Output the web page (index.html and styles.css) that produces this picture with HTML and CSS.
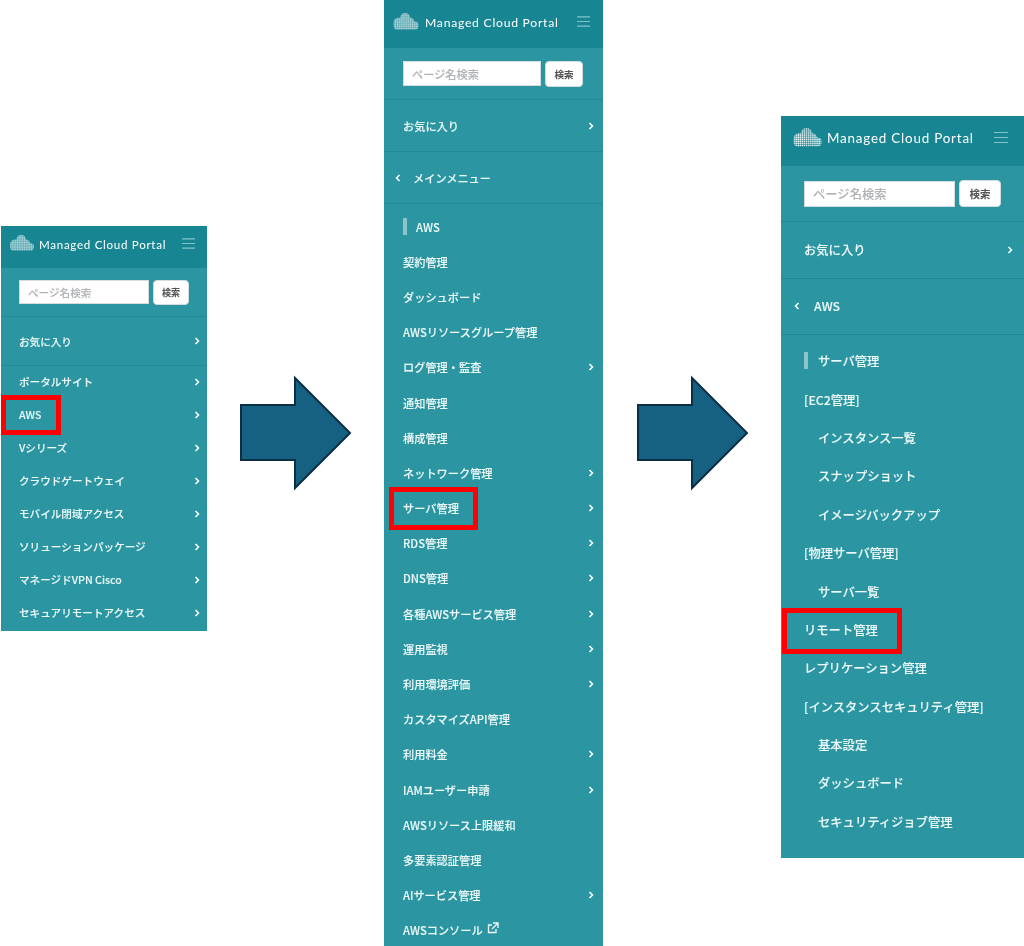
FILE: index.html
```html
<!DOCTYPE html>
<html lang="ja">
<head>
<meta charset="utf-8">
<title>Managed Cloud Portal</title>
<link rel="stylesheet" href="styles.css">
</head>
<body>
<svg class="defs" width="0" height="0" aria-hidden="true">
  <defs>
    <pattern id="dots" width="2.2" height="2.2" patternUnits="userSpaceOnUse">
      <rect x="0.2" y="0.2" width="1.5" height="1.5" fill="#fff"/>
    </pattern>
    <clipPath id="cloud">
      <path d="M0 13 Q0 6 6 5.500 L8 5.500 Q9 0 14 0 Q19 0 20 5.500 Q24 5.500 25 10 Q30 10 30 14.500 Q30 19.500 26 19.500 L4 19.500 Q0 19.500 0 13 Z"/>
    </clipPath>
    <symbol id="logo" viewBox="0 0 30 20">
      <rect width="30" height="20" fill="url(#dots)" clip-path="url(#cloud)"/>
    </symbol>
    <symbol id="chev-r" viewBox="0 0 6 8">
      <path d="M1.500 1 L4.500 4 L1.500 7" fill="none" stroke="currentColor" stroke-width="1.500"/>
    </symbol>
    <symbol id="chev-l" viewBox="0 0 6 8">
      <path d="M4.500 1 L1.500 4 L4.500 7" fill="none" stroke="currentColor" stroke-width="1.500"/>
    </symbol>
    <symbol id="burger" viewBox="0 0 14 12">
      <path d="M0 1 H14 M0 6 H14 M0 11 H14" stroke="currentColor" stroke-width="1.200"/>
    </symbol>
    <symbol id="arrow" viewBox="0 0 112 116">
      <path d="M1 30 H55 V3 L110 58 L55 113 V85 H1 Z" fill="#166082" stroke="#0b2f45" stroke-width="2"/>
    </symbol>
    <symbol id="ext" viewBox="0 0 12 12">
      <path d="M9 7 V10.500 H1.500 V3 H5 M6 1 H11 V6 M11 1 L5 7" fill="none" stroke="currentColor" stroke-width="1.300"/>
    </symbol>
  </defs>
</svg>

<main class="stage">
  <section class="panel panel-sm">
    <header class="head">
      <svg class="logo"><use href="#logo"/></svg>
      <span class="brand">Managed Cloud Portal</span>
      <svg class="burger"><use href="#burger"/></svg>
    </header>
    <form class="search">
      <div class="field">ページ名検索</div>
      <div class="btn">検索</div>
    </form>
    <div class="block"><span>お気に入り</span><svg class="chev"><use href="#chev-r"/></svg></div>
    <ul class="menu">
      <li class="row"><span>ポータルサイト</span><svg class="chev"><use href="#chev-r"/></svg></li>
      <li class="row"><span>AWS</span><svg class="chev"><use href="#chev-r"/></svg><i class="mark mark-1"></i></li>
      <li class="row"><span>Vシリーズ</span><svg class="chev"><use href="#chev-r"/></svg></li>
      <li class="row"><span>クラウドゲートウェイ</span><svg class="chev"><use href="#chev-r"/></svg></li>
      <li class="row"><span>モバイル閉域アクセス</span><svg class="chev"><use href="#chev-r"/></svg></li>
      <li class="row"><span>ソリューションパッケージ</span><svg class="chev"><use href="#chev-r"/></svg></li>
      <li class="row"><span>マネージドVPN Cisco</span><svg class="chev"><use href="#chev-r"/></svg></li>
      <li class="row"><span>セキュアリモートアクセス</span><svg class="chev"><use href="#chev-r"/></svg></li>
    </ul>
  </section>

  <svg class="arrow arrow-1"><use href="#arrow"/></svg>

  <section class="panel panel-md">
    <header class="head">
      <svg class="logo"><use href="#logo"/></svg>
      <span class="brand">Managed Cloud Portal</span>
      <svg class="burger"><use href="#burger"/></svg>
    </header>
    <form class="search">
      <div class="field">ページ名検索</div>
      <div class="btn">検索</div>
    </form>
    <div class="block"><span>お気に入り</span><svg class="chev"><use href="#chev-r"/></svg></div>
    <div class="block back"><svg class="chev"><use href="#chev-l"/></svg><span>メインメニュー</span></div>
    <ul class="menu">
      <li class="row title"><span>AWS</span></li>
      <li class="row"><span>契約管理</span></li>
      <li class="row"><span>ダッシュボード</span></li>
      <li class="row"><span>AWSリソースグループ管理</span></li>
      <li class="row"><span>ログ管理・監査</span><svg class="chev"><use href="#chev-r"/></svg></li>
      <li class="row"><span>通知管理</span></li>
      <li class="row"><span>構成管理</span></li>
      <li class="row"><span>ネットワーク管理</span><svg class="chev"><use href="#chev-r"/></svg></li>
      <li class="row"><span>サーバ管理</span><svg class="chev"><use href="#chev-r"/></svg><i class="mark mark-2"></i></li>
      <li class="row"><span>RDS管理</span><svg class="chev"><use href="#chev-r"/></svg></li>
      <li class="row"><span>DNS管理</span><svg class="chev"><use href="#chev-r"/></svg></li>
      <li class="row"><span>各種AWSサービス管理</span><svg class="chev"><use href="#chev-r"/></svg></li>
      <li class="row"><span>運用監視</span><svg class="chev"><use href="#chev-r"/></svg></li>
      <li class="row"><span>利用環境評価</span><svg class="chev"><use href="#chev-r"/></svg></li>
      <li class="row"><span>カスタマイズAPI管理</span></li>
      <li class="row"><span>利用料金</span><svg class="chev"><use href="#chev-r"/></svg></li>
      <li class="row"><span>IAMユーザー申請</span><svg class="chev"><use href="#chev-r"/></svg></li>
      <li class="row"><span>AWSリソース上限緩和</span></li>
      <li class="row"><span>多要素認証管理</span></li>
      <li class="row"><span>AIサービス管理</span><svg class="chev"><use href="#chev-r"/></svg></li>
      <li class="row"><span class="link">AWSコンソール<svg class="ext"><use href="#ext"/></svg></span></li>
    </ul>
  </section>

  <svg class="arrow arrow-2"><use href="#arrow"/></svg>

  <section class="panel panel-lg">
    <header class="head">
      <svg class="logo"><use href="#logo"/></svg>
      <span class="brand">Managed Cloud Portal</span>
      <svg class="burger"><use href="#burger"/></svg>
    </header>
    <form class="search">
      <div class="field">ページ名検索</div>
      <div class="btn">検索</div>
    </form>
    <div class="block"><span>お気に入り</span><svg class="chev"><use href="#chev-r"/></svg></div>
    <div class="block back"><svg class="chev"><use href="#chev-l"/></svg><span>AWS</span></div>
    <ul class="menu">
      <li class="row title"><span>サーバ管理</span></li>
      <li class="row"><span>[EC2管理]</span></li>
      <li class="row sub"><span>インスタンス一覧</span></li>
      <li class="row sub"><span>スナップショット</span></li>
      <li class="row sub"><span>イメージバックアップ</span></li>
      <li class="row"><span>[物理サーバ管理]</span></li>
      <li class="row sub"><span>サーバ一覧</span></li>
      <li class="row"><span>リモート管理</span><i class="mark mark-3"></i></li>
      <li class="row"><span>レプリケーション管理</span></li>
      <li class="row"><span>[インスタンスセキュリティ管理]</span></li>
      <li class="row sub"><span>基本設定</span></li>
      <li class="row sub"><span>ダッシュボード</span></li>
      <li class="row sub"><span>セキュリティジョブ管理</span></li>
    </ul>
  </section>
</main>
</body>
</html>
```

FILE: styles.css
```css
* { box-sizing: border-box; }

html, body {
  margin: 0;
  padding: 0;
  background: #fff;
}

body {
  width: 1024px;
  height: 946px;
  overflow: hidden;
  font-family: "Noto Sans CJK JP", "Noto Sans", sans-serif;
}

.defs { display: block; height: 0; }

.stage {
  display: flex;
  align-items: flex-start;
  padding-left: 1px;
}

.panel {
  flex: none;
  width: var(--w);
  color: #eef8f8;
  font-size: var(--fs);
  font-weight: 500;
  -webkit-text-stroke: 0.08px currentColor;
  background: #2b96a1;
}

.brand, .burger, .search, .block, .menu { filter: blur(0.3px); }

.panel-sm {
  --w: 206px; --fs: 10.6px; --pad: 18px; --head: 42px; --search: 49px; --block: 49px;
  --row: 33px; --brand: 11.600px; --head-left: 9px; --head-bottom: 6px; --burger-edge: 12px;
  --logo-w: 24px; --logo-h: 16px; --logo-gap: 5px;
  --burger-w: 13px; --burger-h: 11px; --field-h: 24px; --field-w: 130px; --btn-w: 36px; --btn-h: 25px;
  --menu-top: 0px; --menu-bottom: 1px; --edge: 7px; --sub: 14px; --back-pad: 11px; --back-gap: 9px;
  margin-top: 226px;
}

.panel-md {
  --w: 219px; --fs: 11.2px; --pad: 19px; --head: 48px; --search: 52px; --block: 52px;
  --row: 35.200px; --brand: 12.200px; --head-left: 9px; --head-bottom: 4px; --burger-edge: 13px;
  --logo-w: 26px; --logo-h: 17px; --logo-gap: 6px;
  --burger-w: 13px; --burger-h: 11px; --field-h: 25px; --field-w: 138px; --btn-w: 38px; --btn-h: 26px;
  --menu-top: 6px; --menu-bottom: 0px; --edge: 9px; --sub: 13px; --back-pad: 11px; --back-gap: 12px;
  margin-left: 32px;
  height: 946px;
  overflow: hidden;
}

.panel-lg {
  --w: 243px; --fs: 12.300px; --pad: 23px; --head: 50px; --search: 56px; --block: 56.500px;
  --row: 38.400px; --brand: 13.400px; --head-left: 12px; --head-bottom: 6px; --burger-edge: 16px;
  --logo-w: 29px; --logo-h: 19px; --logo-gap: 5px;
  --burger-w: 14px; --burger-h: 13px; --field-h: 26px; --field-w: 151px; --btn-w: 42px; --btn-h: 27px;
  --menu-top: 8px; --menu-bottom: 16px; --edge: 11px; --sub: 14px; --back-pad: 13px; --back-gap: 14px;
  margin-top: 116px;
  margin-left: 32px;
}

/* header */
.head {
  display: flex;
  align-items: center;
  height: var(--head);
  padding: 0 var(--burger-edge) var(--head-bottom) var(--head-left);
  background: #178592;
  color: #fff;
}

.logo {
  flex: none;
  width: var(--logo-w);
  height: var(--logo-h);
  margin-right: var(--logo-gap);
  margin-top: -2px;
}

.brand {
  flex: 1;
  font-family: "Lato", sans-serif;
  font-size: var(--brand);
  font-weight: 400;
  letter-spacing: 0.06em;
  white-space: nowrap;
  -webkit-text-stroke: 0;
}

.burger {
  flex: none;
  width: var(--burger-w);
  height: var(--burger-h);
  margin-top: -1px;
  color: #84c4c9;
}

/* search */
.search {
  display: flex;
  align-items: center;
  gap: 4px;
  height: var(--search);
  margin: 0;
  padding-left: var(--pad);
  border-bottom: 1px solid #238893;
}

.field {
  display: flex;
  align-items: center;
  width: var(--field-w);
  height: var(--field-h);
  padding-left: 8px;
  background: #fff;
  border: 1px solid #d5dcdd;
  color: #b0b3b5;
}

.btn {
  display: flex;
  align-items: center;
  justify-content: center;
  width: var(--btn-w);
  height: var(--btn-h);
  background: #fff;
  border: 1px solid #d5dcdd;
  border-radius: 4px;
  color: #555;
  font-size: 0.85em;
  font-weight: 700;
}

/* sections */
.block {
  display: flex;
  align-items: center;
  justify-content: space-between;
  height: var(--block);
  padding: 0 var(--edge) 0 var(--pad);
  border-bottom: 1px solid #238893;
}

.chev {
  flex: none;
  width: 6px;
  height: 8px;
  color: #fff;
}

.back {
  justify-content: flex-start;
  gap: var(--back-gap);
  padding-left: var(--back-pad);
}

.menu {
  list-style: none;
  margin: 0;
  padding: var(--menu-top) 0 var(--menu-bottom);
}

.row {
  position: relative;
  display: flex;
  align-items: center;
  justify-content: space-between;
  height: var(--row);
  padding: 0 var(--edge) 2px var(--pad);
}

.sub { padding-left: calc(var(--pad) + var(--sub)); }

.title { padding-left: calc(var(--pad) + var(--sub)); }

.title::before {
  content: "";
  position: absolute;
  left: var(--pad);
  top: 50%;
  width: 4px;
  height: 17px;
  margin-top: -10px;
  background: #8cc4c8;
}

.link {
  display: inline-flex;
  align-items: center;
  gap: 4px;
}

.ext {
  width: 12px;
  height: 12px;
  margin-top: -4px;
}

/* red callouts lying over the rows */
.mark {
  position: absolute;
  border: 5px solid #f00;
}

.mark-1 { left: 0; top: -4px; width: 60px; height: 40px; }
.mark-2 { left: 5px; top: -5px; width: 89px; height: 43px; }
.mark-3 { left: 1px; top: -4px; width: 120px; height: 46px; }

/* arrows */
.arrow {
  flex: none;
  width: 112px;
  height: 116px;
  margin-top: 375px;
}

.arrow-1 { margin-left: 33px; }
.arrow-2 { margin-left: 34px; }
```
